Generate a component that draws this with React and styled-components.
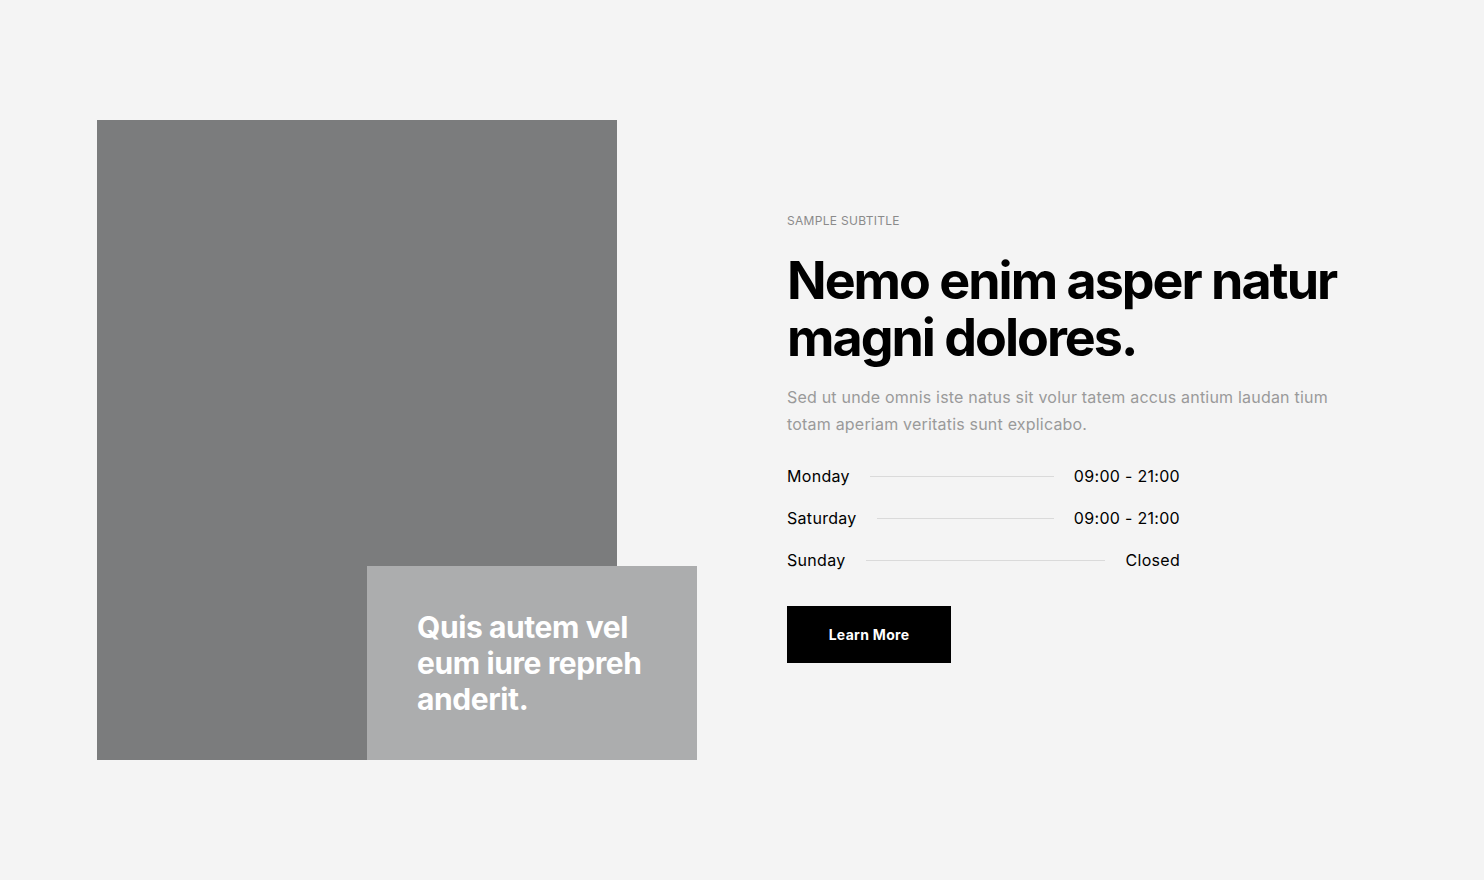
import styled, { createGlobalStyle } from "styled-components";

const GlobalStyle = createGlobalStyle`
  * {
    box-sizing: border-box;
  }

  body {
    margin: 0;
    background-color: #f4f4f4;
    font-family: "Inter", "Liberation Sans", sans-serif;
    color: #000;
  }
`;

const StyledSection = styled.section`
  display: flex;
  align-items: center;
  column-gap: 90px;
  padding: 120px 97px;
  min-height: 880px;
`;

const Media = styled.div`
  position: relative;
  flex: 0 0 600px;
  padding-right: 80px;
`;

const Picture = styled.div`
  width: 520px;
  height: 640px;
  background-color: #7b7c7d;
`;

const Card = styled.div`
  position: absolute;
  right: 0;
  bottom: 0;
  width: 330px;
  height: 194px;
  display: flex;
  align-items: center;
  padding: 0 50px;
  background-color: #acadae;
  color: #fff;

  h3 {
    margin: 0;
    font-size: 30px;
    line-height: 36px;
    font-weight: 700;
    letter-spacing: -0.4px;
  }
`;

const Content = styled.div`
  flex: 1;
  max-width: 570px;
  padding-bottom: 4px;
`;

const Subtitle = styled.p`
  margin: 0 0 24px;
  font-size: 12px;
  text-transform: uppercase;
  color: #8a8a8a;
  letter-spacing: 0.3px;
`;

const Title = styled.h2`
  margin: 0 0 18px;
  font-size: 52px;
  line-height: 57px;
  font-weight: 700;
  letter-spacing: -2px;
`;

const Text = styled.p`
  margin: 0 0 26px;
  max-width: 560px;
  font-size: 16px;
  line-height: 27px;
  color: #9a9a9a;
  letter-spacing: 0.2px;
`;

const Hours = styled.ul`
  list-style: none;
  margin: 0 0 34px;
  padding: 0;
  width: 393px;
  display: flex;
  flex-direction: column;
  row-gap: 18px;
`;

const Row = styled.li`
  display: flex;
  align-items: center;
  column-gap: 20px;
  font-size: 16px;
  line-height: 24px;
  letter-spacing: 0.3px;

  &::after {
    content: "";
    order: 1;
    flex: 1;
    height: 1px;
    background-color: #dadada;
  }

  span:last-child {
    order: 2;
  }
`;

const Button = styled.button`
  width: 164px;
  height: 57px;
  border: none;
  background-color: #000;
  color: #fff;
  font-family: inherit;
  font-size: 14px;
  font-weight: 700;
  letter-spacing: 0.3px;
  cursor: pointer;
`;

const hours = [
  { day: "Monday", time: "09:00 - 21:00" },
  { day: "Saturday", time: "09:00 - 21:00" },
  { day: "Sunday", time: "Closed" },
];

const App = () => {
  return (
    <>
      <GlobalStyle />
      <StyledSection>
        <Media>
          <Picture />
          <Card>
            <h3>
              Quis autem vel
              <br />
              eum iure repreh
              <br />
              anderit.
            </h3>
          </Card>
        </Media>
        <Content>
          <Subtitle>Sample subtitle</Subtitle>
          <Title>
            Nemo enim asper natur
            <br />
            magni dolores.
          </Title>
          <Text>
            Sed ut unde omnis iste natus sit volur tatem accus antium laudan tium totam aperiam
            veritatis sunt explicabo.
          </Text>
          <Hours>
            {hours.map((item) => (
              <Row key={item.day}>
                <span>{item.day}</span>
                <span>{item.time}</span>
              </Row>
            ))}
          </Hours>
          <Button>Learn More</Button>
        </Content>
      </StyledSection>
    </>
  );
};

export default App;
